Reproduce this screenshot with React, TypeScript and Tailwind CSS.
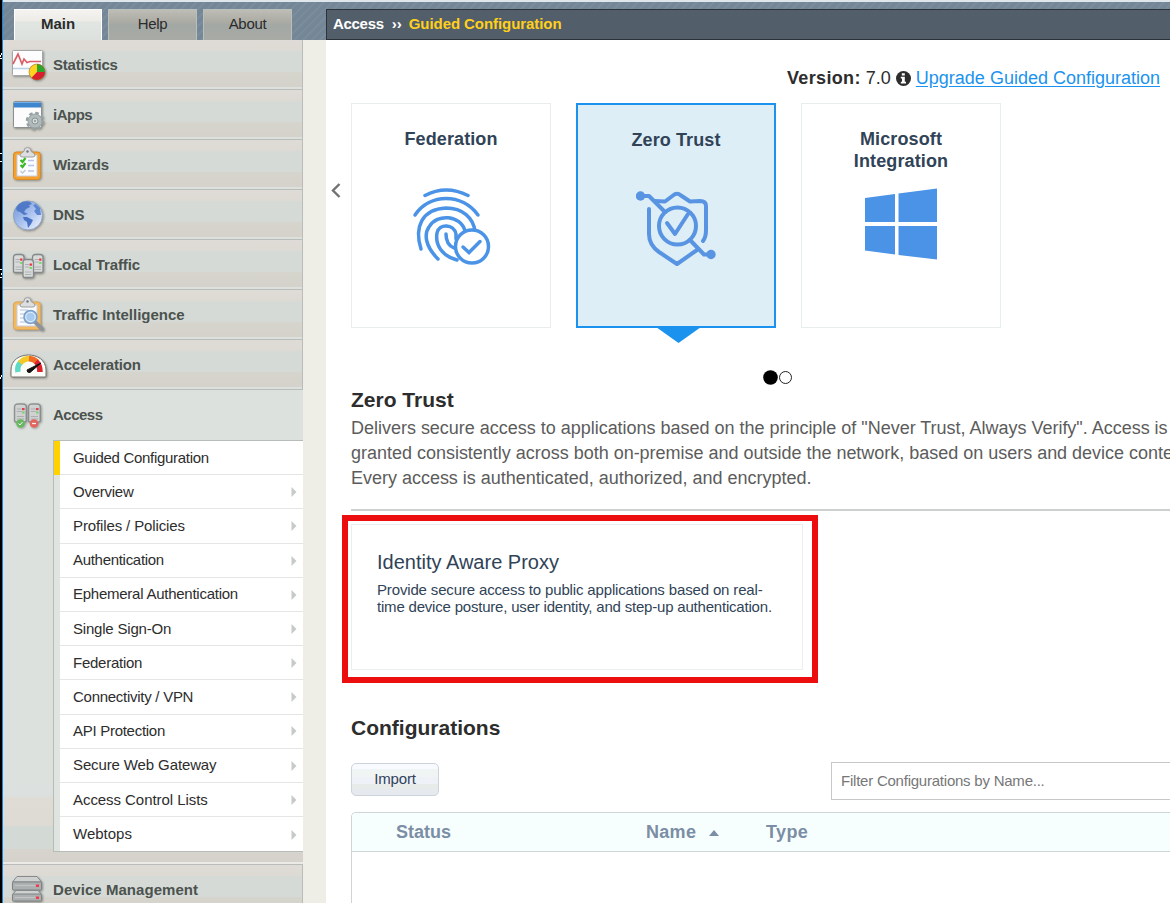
import React from "react";

const menu: [string, string, string][] = [
  ["Statistics", "stats", "tracking-[-0.2px]"],
  ["iApps", "iapps", "tracking-[-0.5px]"],
  ["Wizards", "wizards", "tracking-[-0.2px]"],
  ["DNS", "dns", "tracking-[-0.1px]"],
  ["Local Traffic", "traffic", "tracking-[-0.1px]"],
  ["Traffic Intelligence", "intel", "tracking-[0px]"],
  ["Acceleration", "accel", "tracking-[-0.2px]"],
];

const access: [string, string][] = [
  ["Guided Configuration", "tracking-[-0.3px]"],
  ["Overview", "tracking-[-0.25px]"],
  ["Profiles / Policies", "tracking-[-0.12px]"],
  ["Authentication", "tracking-[-0.3px]"],
  ["Ephemeral Authentication", "tracking-[-0.25px]"],
  ["Single Sign-On", "tracking-[-0.2px]"],
  ["Federation", "tracking-[-0.25px]"],
  ["Connectivity / VPN", "tracking-[-0.27px]"],
  ["API Protection", "tracking-[-0.28px]"],
  ["Secure Web Gateway", "tracking-[-0.12px]"],
  ["Access Control Lists", "tracking-[-0.06px]"],
  ["Webtops", "tracking-[0px]"],
];

function Clipboard({ children, faded }: { children?: React.ReactNode; faded?: boolean }) {
  return (
    <>
      <rect x="3.500" y="7" width="27" height="27.500" rx="3" fill={faded ? "#f3b860" : "#f5a02f"} stroke={faded ? "#dda757" : "#d98a22"} />
      <rect x="7" y="10" width="20" height="21" fill="#fbfcff" stroke="#c9cedb" />
      <path d="M10 10 L12 7.500 Q14 7 14 6 A3.500 3.500 0 0 1 21 6 Q21 7 23 7.500 L25 10 Q25 12 23 12 H12 Q10 12 10 10Z" fill="#dcdedf" stroke="#9c9fa0" />
      <circle cx="17.500" cy="6.500" r="1.200" fill="#777" />
      {children}
    </>
  );
}

function Server({ x, y, wide }: { x: number; y: number; wide?: boolean }) {
  return (
    <g transform={`translate(${x} ${y}) scale(${wide ? 1.12 : 1} 1)`}>
      <path d="M.5 17 V3.500 Q.5 .5 3.500 .5 H8 Q11 .5 11 3.500 V17 Q11 18.500 9 18.500 H2.500 Q.5 18.500 .5 17Z" fill="#d9dbdb" stroke="#858989" strokeWidth="1.300" />
      <path d="M2.500 5.500 H7 M2.500 8 H7 M2.500 13 H9 M2.500 15.500 H9" stroke="#aeb2b2" />
      <rect x="7.200" y="4.500" width="2.200" height="2.200" fill="#ef2b3c" />
      <rect x="7.200" y="8" width="2.200" height="2" fill="#74dc5e" />
    </g>
  );
}

function MenuIcon({ name }: { name: string }) {
  return (
    <svg width="40" height="40" viewBox="0 0 40 40" fill="none" className="shrink-0 drop-shadow-[1px_1px_1px_rgba(0,0,0,0.35)]">
      {name === "stats" && (
        <>
          <rect x="2.500" y="5.500" width="30" height="25" rx="1" fill="#fdfdfd" stroke="#a4a6a7" />
          <path d="M3 23.500h29" stroke="#b9d2ea" strokeWidth="1.500" />
          <path d="M3 19 L8 9 L12 19 L14 14 L17 17.500 L20 16.500 H31" stroke="#dc5e66" strokeWidth="1.700" />
          <circle cx="27" cy="27" r="8" fill="#ffd21f" />
          <path d="M27 27 V19 A8 8 0 0 1 35 27Z" fill="#2ca52c" />
          <path d="M27 27 H35 A8 8 0 0 1 21.500 32.800Z" fill="#d81f2f" />
          <circle cx="27" cy="27" r="8" stroke="#8b5a20" strokeOpacity=".5" />
        </>
      )}
      {name === "iapps" && (
        <>
          <rect x="3.500" y="6.500" width="28" height="26" rx="1" fill="#fcfcfc" stroke="#8b8f91" />
          <rect x="4" y="7" width="27" height="5.500" fill="#3d85cc" />
          <path d="M4 7.500 H31" stroke="#78b1e6" />
          <circle cx="25" cy="26" r="8" stroke="#98a1a2" strokeWidth="2.500" strokeDasharray="3.600 2.680" />
          <circle cx="25" cy="26" r="7" fill="#b1babb" stroke="#98a1a2" />
          <circle cx="25" cy="26" r="3" fill="#d6dada" stroke="#8b9494" />
          <circle cx="25" cy="26" r="1" fill="#899293" />
        </>
      )}
      {name === "wizards" && (
        <Clipboard>
          <path d="M10.500 15 l2 2 3-4 M10.500 20 l2 2 3-4" stroke="#3cba24" strokeWidth="2.200" />
          <path d="M10.500 26 l2 2 3-3" stroke="#c6c8cc" strokeWidth="1.500" />
          <path d="M18 15.500h6 M18 20.500h6 M18 26h6" stroke="#b5c3e8" strokeWidth="1.500" />
        </Clipboard>
      )}
      {name === "dns" && (
        <>
          <defs>
            <linearGradient id="globe" x1="0" y1="0" x2="1" y2="1">
              <stop stopColor="#6d92d6" />
              <stop offset=".5" stopColor="#a8c1ee" />
              <stop offset="1" stopColor="#f5f9ff" />
            </linearGradient>
          </defs>
          <circle cx="18" cy="20.500" r="14.500" fill="url(#globe)" stroke="#8fa2c2" />
          <path d="M9 9 Q14 5 20 7 L22 9 L19 10 L20 12 L16 14 L14 17 L18 19 L14 20 L10 17 L7 16 L6 13Z" fill="#5079c7" />
          <path d="M13 22 L17 22 L23 25 L21 29 L18 33 L17 27 L14 25Z" fill="#4873c4" />
          <path d="M23 10 L26 9 L30 13 L31 20 L27 20 L24 16 L26 14Z" fill="#5c86d2" />
        </>
      )}
      {name === "traffic" && (
        <>
          <Server x={3} y={9} />
          <Server x={22} y={9} />
          <Server x={12.5} y={14} />
        </>
      )}
      {name === "intel" && (
        <Clipboard faded>
          <path d="M10 15h8 M10 19h5 M10 23h5 M10 27h8" stroke="#ccd4e4" strokeWidth="1.500" />
          <path d="M25.500 27.500 L32 34" stroke="#8e9499" strokeWidth="4" strokeLinecap="round" />
          <circle cx="20.500" cy="22" r="6.500" fill="#a8cbf0" stroke="#7ba0c9" strokeWidth="1.500" />
          <circle cx="20.500" cy="22" r="4.700" stroke="#e2effa" />
        </Clipboard>
      )}
      {name === "accel" && (
        <>
          <path d="M1 31 V25 C1 5 36 5 36 25 V31Q36 32 35 32H2Q1 32 1 31Z" fill="#fbfbf8" stroke="#77736e" />
          <path d="M8 27 C7 21 9 19 11 17" stroke="#5ed9c6" strokeWidth="5.500" />
          <path d="M10 18 Q14 13.500 20 13.500" stroke="#f3c927" strokeWidth="5.500" />
          <path d="M19 13.500 Q24 14 27 17" stroke="#f26a22" strokeWidth="5.500" />
          <path d="M26 16.500 Q30 20 30 27" stroke="#dc1e2d" strokeWidth="5.500" />
          <path d="M31 18 L17 25 Q17 28 20 27.500Z" fill="#111" stroke="#111" />
        </>
      )}
      {name === "access" && (
        <g opacity=".85">
          <Server x={4} y={8.5} wide />
          <Server x={18} y={8.5} wide />
          <circle cx="10.500" cy="28.500" r="4.300" fill="#5cbd55" />
          <path d="M8.500 28.500 l1.500 1.500 2.500-3" stroke="#fff" />
          <circle cx="24" cy="28.500" r="4.300" fill="#ee5b52" />
          <path d="M22 28.500h4" stroke="#fff" strokeWidth="1.300" />
        </g>
      )}
      {name === "device" && (
        <>
          <path d="M7 6.500 H27 L31.500 12 H2.500Z" fill="#cfd1d1" stroke="#868a8a" />
          <rect x="2.500" y="12" width="29" height="8" rx="1" fill="#adb0b0" stroke="#7f8383" />
          <path d="M6 20.500 H28 L31.500 24.500 H2.500Z" fill="#cfd1d1" stroke="#868a8a" />
          <rect x="2.500" y="24" width="29" height="7" rx="1" fill="#adb0b0" stroke="#7f8383" />
          <path d="M5 15.500h20 M5 27.500h20" stroke="#c4c6c6" />
          <rect x="26" y="14.500" width="3" height="2.500" fill="#f23b4d" />
          <rect x="26" y="26.500" width="3" height="2.500" fill="#f23b4d" />
        </>
      )}
    </svg>
  );
}

function MenuRow({ label, icon, tracking }: { label: string; icon: string; tracking: string }) {
  return (
    <div className="flex h-[50px] shrink-0 items-center border-r border-b border-[#b8bdba] bg-[linear-gradient(#dfdbd6_0px,#dddad4_11px,#d5dad6_11px,#d5dad6_32px,#d6d5cd_32px,#d4d2cb_47px,#dde1de_47px)] pl-[7px]">
      <MenuIcon name={icon} />
      <span className={`ml-[3px] pt-[2px] text-[15px] font-bold text-[#4c524e] ${tracking}`}>{label}</span>
    </div>
  );
}

function Sidebar() {
  return (
    <aside className="flex w-[300px] shrink-0 flex-col bg-[#dde1de]">
      {menu.map(([label, icon, tracking]) => (
        <MenuRow key={label} label={label} icon={icon} tracking={tracking} />
      ))}
      <section className="flex h-[475px] shrink-0 flex-col border-b border-[#b8bdba] bg-[linear-gradient(#dde1de_0px,#dde1de_390px,#dbe0de_407px,#dfdbd5_407px,#dddad4_436px,#d3dad6_436px,#d3dad6_459px,#d6d4cd_459px,#d4d2cb_472px,#eceae6_472px)]">
        <div className="flex h-[50px] shrink-0 items-center pl-[7px]">
          <MenuIcon name="access" />
          <span className="ml-[3px] text-[15px] font-bold tracking-[-0.5px] text-[#4c524e]">Access</span>
        </div>
        <ul className="ml-[50px] border-y border-l border-[#b8bcb9]">
          {access.map(([label, tracking], i) => (
            <li
              key={label}
              className={`flex h-[34.2px] border-l-[6px] ${i === 0 ? "border-[#ffd200]" : "border-[#dfe4e1]"}`}
            >
              <div className={`flex flex-1 items-center justify-between border-[#e3e6e5] bg-white pt-[0.8px] pr-[6px] pl-[13px] ${i < 11 ? "border-b" : ""}`}>
                <span className={`text-[15px] text-[#2d2d2d] ${tracking}`}>{label}</span>
                {i > 0 && (
                  <svg width="6" height="10" viewBox="0 0 6 10">
                    <path d="M.5 0 L5.500 5 L.5 10Z" fill="#c6cac8" />
                  </svg>
                )}
              </div>
            </li>
          ))}
        </ul>
      </section>
      <MenuRow label="Device Management" icon="device" tracking="tracking-[0.05px]" />
    </aside>
  );
}

function Fingerprint() {
  return (
    <svg width="80" height="80" viewBox="0 0 80 80" fill="none" stroke="#4a93e6" strokeWidth="3.500" strokeLinecap="round">
      <path d="M14 8.500 Q35 -2.500 57 8.500" />
      <path d="M4 28 C19 6 51 6 67 28" />
      <path d="M10 62 C3 40 11 22 35 21 C52 21 62 31 64 44" />
      <path d="M27 72 C14 59 13 47 18 40 C26 26 50 28 54 44" />
      <path d="M46 73 C31 69 24 58 26 46 C28 36 43 37 45 47 V52" />
      <path d="M35 47 C35 55 38 59 43 61" />
      <circle cx="61" cy="59.500" r="16.500" fill="#fff" />
      <path d="M52 60 L58 65.500 L69 54.500" />
    </svg>
  );
}

function Shield() {
  return (
    <svg width="80" height="76" viewBox="0 0 80 76" fill="none" stroke="#5994e2" strokeWidth="4" strokeLinecap="round" strokeLinejoin="round">
      <circle cx="4.500" cy="6" r="4.700" fill="#5994e2" stroke="none" />
      <circle cx="75" cy="64.500" r="4.700" fill="#5994e2" stroke="none" />
      <path d="M5 6 H13 L29 22" />
      <path d="M19 11 L29 11.500 L37 5.500 Q41 2 45 5.500 L54 11.500 L64 11 Q70 11 70 16 V40 Q70 47 67 51" />
      <path d="M13 19 V44 Q13 55 23 62 L41 74 L61 60" />
      <circle cx="41.500" cy="36" r="18.500" />
      <path d="M31 33 L39 44 L52 24" />
      <path d="M54 50 L68 64.500 H75" />
    </svg>
  );
}

function Card({ title, children, active }: { title: React.ReactNode; children: React.ReactNode; active?: boolean }) {
  return (
    <div
      className={`relative flex h-[225px] w-[200px] flex-col items-center pt-6 text-center text-[18px] leading-[22px] font-bold tracking-[0.12px] text-[#304357] ${
        active ? "border-2 border-[#1b93ee] bg-[#deeef7]" : "border border-[#e8eeed] bg-white"
      }`}
    >
      <h3 className="h-[44px]">{title}</h3>
      {children}
      {active && (
        <svg className="absolute top-[222px] left-[78px]" width="46" height="17" viewBox="0 0 46 17">
          <path d="M0 0H45L22.500 16Z" fill="#1b93ee" />
        </svg>
      )}
    </div>
  );
}

export default function App() {
  return (
    <div className="flex h-[903px] w-[1170px] overflow-hidden bg-white font-['Liberation_Sans',Arial,sans-serif]">
      <div className="w-[3px] shrink-0 border-r border-[#1a86d9] bg-black">
        <svg width="2" height="400" viewBox="0 0 2 400" stroke="#fff">
          <path d="M1.500 53v2 M.5 55v2 M0 58.500h2 M0 153.500h2 M0 161.500h2 M0 269.500h2 M1.500 273v2 M0 277.500h2 M1.500 375v2 M.5 377v2" />
        </svg>
      </div>
      <div className="flex min-w-0 flex-1 flex-col">
        <header className="flex h-[40px] shrink-0 items-end border-t-2 border-[#dfe6ec] bg-[repeating-linear-gradient(135deg,#748797_0px,#748797_4px,#7b8d9c_4px,#7b8d9c_6px)]">
          <nav className="flex w-[323px] gap-[6px] pl-[11px] text-center text-[15px] leading-[28px] text-[#2b2b2b]">
            <div className="h-[31px] w-[88px] border border-b-0 border-white bg-[linear-gradient(#f4f3f0,#eeece6_35%,#e2e6e3_40%,#dde1de)] font-bold">Main</div>
            <div className="h-[31px] w-[89px] border border-b-0 border-[#b9bfbd] bg-[linear-gradient(#bdbcb5,#aeada5_35%,#a3a8a4_50%,#a8aaa5)] tracking-[-0.3px]">Help</div>
            <div className="h-[31px] w-[89px] border border-b-0 border-[#b9bfbd] bg-[linear-gradient(#bdbcb5,#aeada5_35%,#a3a8a4_50%,#a8aaa5)] tracking-[-0.3px]">About</div>
          </nav>
          <div className="flex h-[31px] flex-1 items-center border border-r-0 border-[#2c3238] bg-[#535e6b] pl-[6px] text-[15px] font-bold text-white">
            <span className="tracking-[-0.3px]">Access</span>
            <span className="ml-[8px]">››</span>
            <span className="ml-[7px] tracking-[-0.07px] text-[#ffd01a]">Guided Configuration</span>
          </div>
        </header>
        <div className="flex min-h-0 flex-1">
          <Sidebar />
          <div className="w-[23px] shrink-0 bg-[#eeeee6]" />
          <main className="min-w-0 flex-1 overflow-hidden">
            <div className="flex h-[63px] items-center justify-end pt-[14px] pr-[10px] text-[18px] text-[#2d2d2d]">
              <b className="tracking-[0.35px]">Version:</b>
              <span className="ml-[5px]">7.0</span>
              <svg className="mx-[5px]" width="15" height="15" viewBox="0 0 15 15">
                <circle cx="7.500" cy="7.500" r="7.500" fill="#2d2d2d" />
                <path d="M5.800 2.200h3v2.200h-3zM4.800 5.700h4v5h1.200v1.800H4.800v-1.800h1.200V7.400H4.800z" fill="#fff" />
              </svg>
              <a className="text-[#1b93ee] underline underline-offset-2">Upgrade Guided Configuration</a>
            </div>
            <div className="flex">
              <div className="flex w-[25px] justify-center pt-[80px] pr-[5px]">
                <svg width="10" height="15" viewBox="0 0 10 15">
                  <path d="M8.500 1 L2 7.500 L8.500 14" fill="none" stroke="#727272" strokeWidth="2.400" />
                </svg>
              </div>
              <div className="flex gap-[25px]">
                <Card title="Federation">
                  <div className="mt-[15px] mr-px"><Fingerprint /></div>
                </Card>
                <Card title="Zero Trust" active>
                  <div className="mt-[17px]"><Shield /></div>
                </Card>
                <Card title={<>Microsoft<br />Integration</>}>
                  <svg className="mt-[16px]" width="72" height="72" viewBox="0 0 72 72" fill="#4a93e6">
                    <path d="M0 10 L30 6 V34 H0Z M33.500 5.500 L72 .5 V34 H33.500Z M0 38 H30 V66.500 L0 62.500Z M33.500 38 H72 V71.500 L33.500 67Z" />
                  </svg>
                </Card>
              </div>
            </div>
            <div className="mt-[42px] flex h-[15px] pl-[437px]">
              <svg width="30" height="15" viewBox="0 0 30 15">
                <circle cx="7.500" cy="7.500" r="7.300" />
                <circle cx="22.500" cy="7.500" r="6" fill="#fff" stroke="#222" />
              </svg>
            </div>
            <div className="pl-[25px]">
              <h2 className="mt-[3px] text-[21px] leading-[24px] font-bold text-[#2d2d2d]">Zero Trust</h2>
              <div className="mt-[4px] text-[18px] leading-[25px] tracking-[-0.015px] whitespace-nowrap text-[#5c5c5c]">
                <p>Delivers secure access to applications based on the principle of "Never Trust, Always Verify". Access is</p>
                <p>granted consistently across both on-premise and outside the network, based on users and device context.</p>
                <p>Every access is authenticated, authorized, and encrypted.</p>
              </div>
              <div className="mt-[18px] h-[2px] bg-[#ced0d0]" />
            </div>
            <div className="mt-[4px] ml-[16px] h-[168px] w-[476px] border-[6px] border-[#ec0e0e] pt-[3px] pl-[3px]">
              <div className="h-[146px] w-[452px] border border-[#e8efed] pt-[25px] pl-[25px] text-[#304357]">
                <h3 className="text-[20px] leading-[24px]">Identity Aware Proxy</h3>
                <div className="mt-[7px] text-[15px] leading-[17px] whitespace-nowrap">
                  <p className="tracking-[-0.15px]">Provide secure access to public applications based on real-</p>
                  <p className="tracking-[-0.2px]">time device posture, user identity, and step-up authentication.</p>
                </div>
              </div>
            </div>
            <div className="pl-[25px]">
              <h2 className="mt-[33px] text-[21px] leading-[24px] font-bold text-[#2d2d2d]">Configurations</h2>
              <div className="mt-[22px] flex h-[38px] items-start justify-between">
                <button className="mt-px h-[33px] w-[88px] rounded-[5px] border border-[#ccd3da] bg-[linear-gradient(#f8faff_5px,#eff5f4_5px,#f0f5f4_13px,#eef1f8_13px,#eef1f7_20px,#e7ece9_20px,#e7ecea_25px,#e6e9ed_25px)] text-[15px] tracking-[-0.15px] text-[#304357]">Import</button>
                <div className="flex h-[38px] w-[339px] items-center border border-r-0 border-[#c8c8c8] pl-[9px] text-[15px] tracking-[-0.23px] text-[#777]">Filter Configurations by Name...</div>
              </div>
              <div className="mt-[12px] h-[100px] rounded-tl-[5px] border-t border-l border-[#cfd5d3]">
                <div className="flex h-[39px] items-center rounded-tl-[4px] border-b border-[#cfd5d3] bg-[#f7fffe] pl-[44px] text-[18px] font-bold text-[#7b8ea5]">
                  <span className="w-[250px]">Status</span>
                  <span className="flex w-[120px] items-center gap-[13px]">
                    <span className="tracking-[0.3px]">Name</span>
                    <svg className="mt-0.5" width="10" height="6" viewBox="0 0 10 6"><path d="M5 0L10 6H0Z" fill="#7b8ea5" /></svg>
                  </span>
                  <span className="tracking-[0.4px]">Type</span>
                </div>
              </div>
            </div>
          </main>
        </div>
      </div>
    </div>
  );
}
